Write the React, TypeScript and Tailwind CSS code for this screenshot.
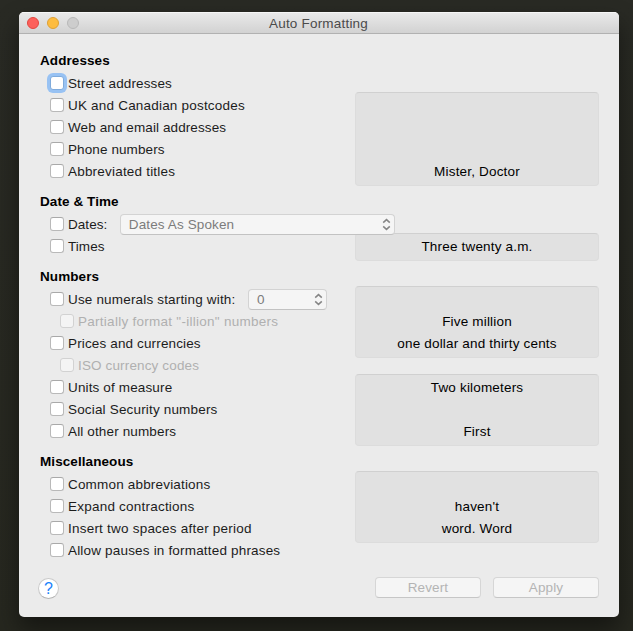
import type { ReactNode } from 'react';
import { clsx } from 'clsx';

type Option = {
  label: string;
  tracking?: string;
  nested?: boolean;
  focused?: boolean;
  control?: ReactNode;
};

function Chevrons() {
  return (
    <svg className="shrink-0" width="9" height="13" viewBox="0 0 9 13" fill="none" stroke="#858585" strokeWidth="1.5">
      <path d="M1.2 4.6 4.5 1.6 7.8 4.6M1.2 8.4 4.5 11.4 7.8 8.4" />
    </svg>
  );
}

function Popup({ value, className }: { value: string; className: string }) {
  return (
    <button
      className={clsx(
        'relative z-10 flex h-[21px] shrink-0 items-center justify-between rounded-[4px] border border-[#d3d3d3] border-b-[#c2c2c2] bg-[#f5f5f5]/95 pr-[3px] pl-2 text-[#7c7c7c]',
        className,
      )}
    >
      <span className="pt-0.5">{value}</span>
      <Chevrons />
    </button>
  );
}

function OptionRow({ label, tracking = 'tracking-[0.14px]', nested, focused, control }: Option) {
  return (
    <div className={clsx('flex h-[22px] items-center', nested ? 'pl-5' : 'pl-[10px]')}>
      <span
        className={clsx(
          'size-[14px] shrink-0 rounded-[3px] border',
          nested ? 'border-[#d2d2d2] bg-[#f4f4f4]' : 'bg-white',
          !nested && !focused && 'border-[#b9b9b9] border-t-[#a9a9a9]',
          focused && 'border-[#7fabdc] ring-[3px] ring-[#98c2f3]',
        )}
      />
      <span className={clsx('ml-1 pt-0.5 whitespace-nowrap', tracking, nested ? 'text-[#b0b0b0]' : 'text-[#1c1c1c]')}>
        {label}
      </span>
      {control}
    </div>
  );
}

function Section({ title, options }: { title: string; options: Option[] }) {
  return (
    <section className="mb-2">
      <h2 className="h-[23px] font-bold leading-[23px] tracking-[0.08px] text-black">{title}</h2>
      {options.map((option) => (
        <OptionRow key={option.label} {...option} />
      ))}
    </section>
  );
}

function Preview({ lines, className }: { lines: string[]; className: string }) {
  return (
    <div
      className={clsx(
        'flex flex-col justify-end rounded-[4px] border border-[#dcdcdc] border-t-[#d0d0d0] bg-[#e1e1e1] pb-0.5 text-center tracking-[0.18px] text-black',
        className,
      )}
    >
      {lines.map((text, i) => (
        <p key={i} className="h-[22px] leading-[22px]">
          {text}
        </p>
      ))}
    </div>
  );
}

function PushButton({ children }: { children: ReactNode }) {
  return (
    <button className="h-[21px] w-[106px] rounded-[4px] border border-[#d6d6d6] border-b-[#c6c6c6] bg-[#f5f5f5] leading-[19px] text-[#b4b4b4]">
      {children}
    </button>
  );
}

export default function App() {
  return (
    <main className="h-[631px] w-[633px] overflow-hidden bg-gradient-to-b from-[#292a24] to-[#26271f] pt-3 pl-[19px] font-['Liberation_Sans',Arial,sans-serif] text-[13.5px] leading-[20px] tracking-[0.12px]">
      <div className="flex h-[605px] w-[600px] flex-col overflow-hidden rounded-[5px] bg-[#ebebeb] shadow-[0_12px_24px_rgba(0,0,0,0.45)]">
        <header className="flex h-[22px] shrink-0 items-center border-t border-b border-t-[#f6f6f6] border-b-[#b1b1b1] bg-gradient-to-b from-[#e9e9e9] to-[#d2d2d2] pl-2">
          <div className="flex w-[52px] gap-2">
            <span className="size-3 rounded-full border border-[#e2463f] bg-[#fc605b]" />
            <span className="size-3 rounded-full border border-[#dea034] bg-[#fdbc40]" />
            <span className="size-3 rounded-full border border-[#b8b8b8] bg-[#cdcdcd]" />
          </div>
          <h1 className="grow pt-0.5 pr-[61px] text-center tracking-[0.2px] text-[#4b4b4b]">Auto Formatting</h1>
        </header>

        <div className="flex pt-[15px] pl-[21px]">
          <div className="w-[315px] shrink-0">
            <Section
              title="Addresses"
              options={[
                { label: 'Street addresses', focused: true, tracking: 'tracking-[0.12px]' },
                { label: 'UK and Canadian postcodes', tracking: 'tracking-[0.2px]' },
                { label: 'Web and email addresses', tracking: 'tracking-[0.1px]' },
                { label: 'Phone numbers', tracking: 'tracking-[0.1px]' },
                { label: 'Abbreviated titles', tracking: 'tracking-[0.2px]' },
              ]}
            />
            <Section
              title="Date & Time"
              options={[
                {
                  label: 'Dates:',
                  tracking: 'tracking-[0.05px]',
                  control: <Popup value="Dates As Spoken" className="ml-[12.5px] w-[275px]" />,
                },
                { label: 'Times', tracking: 'tracking-[0.05px]' },
              ]}
            />
            <Section
              title="Numbers"
              options={[
                {
                  label: 'Use numerals starting with:',
                  tracking: 'tracking-[0.17px]',
                  control: <Popup value="0" className="ml-[12.5px] w-[79px]" />,
                },
                { label: 'Partially format "-illion" numbers', nested: true, tracking: 'tracking-[0.27px]' },
                { label: 'Prices and currencies' },
                { label: 'ISO currency codes', nested: true },
                { label: 'Units of measure' },
                { label: 'Social Security numbers', tracking: 'tracking-[0.17px]' },
                { label: 'All other numbers' },
              ]}
            />
            <Section
              title="Miscellaneous"
              options={[
                { label: 'Common abbreviations', tracking: 'tracking-[0.18px]' },
                { label: 'Expand contractions', tracking: 'tracking-[0.22px]' },
                { label: 'Insert two spaces after period', tracking: 'tracking-[0.22px]' },
                { label: 'Allow pauses in formatted phrases', tracking: 'tracking-[0.18px]' },
              ]}
            />
          </div>

          <div className="w-[244px] shrink-0 pt-[43px]">
            <Preview className="h-[94px]" lines={['Mister, Doctor']} />
            <Preview className="mt-[47px] h-[28px]" lines={['Three twenty a.m.']} />
            <Preview className="mt-[25px] h-[72px]" lines={['Five million', 'one dollar and thirty cents']} />
            <Preview className="mt-4 h-[72px]" lines={['Two kilometers', '', 'First']} />
            <Preview className="mt-[25px] h-[72px]" lines={["haven't", 'word. Word']} />
          </div>
        </div>

        <footer className="flex items-start pt-2 pr-5 pl-[19px]">
          <button className="mt-px mr-auto flex size-[21px] items-center justify-center rounded-full border border-[#c9c9c9] border-b-[#b4b4b4] bg-white text-[16px] leading-none text-[#1a82fb]">
            ?
          </button>
          <div className="flex gap-3">
            <PushButton>Revert</PushButton>
            <PushButton>Apply</PushButton>
          </div>
        </footer>
      </div>
    </main>
  );
}
